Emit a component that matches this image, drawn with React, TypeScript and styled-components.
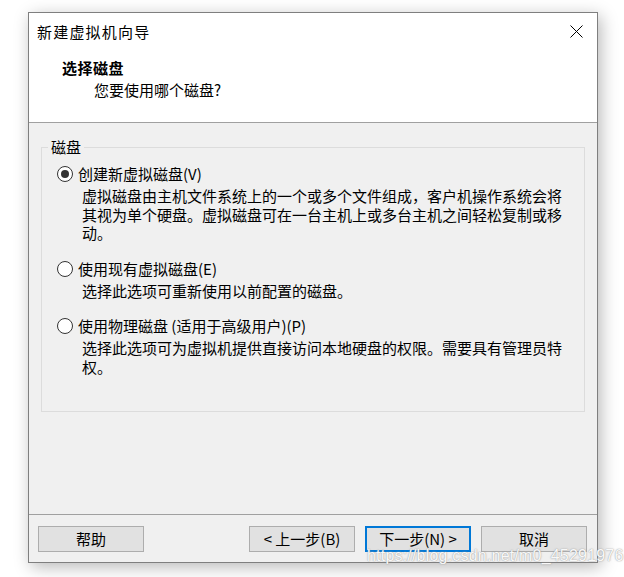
import React from "react";
import styled, { createGlobalStyle } from "styled-components";

const Global = createGlobalStyle`
  html, body { margin: 0; padding: 0; background: #ffffff; }
  body { width: 624px; height: 577px; overflow: hidden; position: relative;
    font-family: "Noto Sans CJK SC", "Noto Sans", sans-serif; color: #000; }
  * { box-sizing: border-box; }
`;

const Page = styled.div`
  padding: 12px 0 0 28px;
`;

const Window = styled.div`
  width: 570px;
  height: 551px;
  border: 1px solid #7f7f7f;
  background: #f0f0f0;
  display: flex;
  flex-direction: column;
  box-shadow: 3px 4px 16px rgba(0, 0, 0, 0.28);
`;

const Header = styled.div`
  height: 110px;
  flex: none;
  background: #ffffff;
  border-bottom: 1px solid #a0a0a0;
`;

const TitleRow = styled.div`
  height: 37px;
  display: flex;
  align-items: center;
  justify-content: space-between;
  padding: 0 14px 0 8px;
`;

const Title = styled.div`
  font-size: 15px;
  letter-spacing: 1.2px;
  line-height: 20px;
`;

const CloseBtn = styled.div`
  width: 14px;
  height: 14px;
  display: flex;
  align-items: center;
  justify-content: center;
`;

const Heading = styled.div`
  margin: 8px 0 0 33px;
  font-size: 15px;
  font-weight: 700;
  letter-spacing: 0.5px;
  line-height: 20px;
`;

const SubHeading = styled.div`
  margin: 2px 0 0 65px;
  font-size: 15px;
  line-height: 20px;
`;

const Body = styled.div`
  flex: 1;
  padding: 14px 12px 0 12px;
`;

const Group = styled.fieldset`
  margin: 0;
  height: 275px;
  border: 1px solid #dcdcdc;
  padding: 0 0 0 15px;
  min-width: 0;
`;

const Legend = styled.legend`
  font-size: 15px;
  line-height: 20px;
  padding: 0 3px;
  margin-left: -9px;
`;

const Option = styled.div<{ $first?: boolean }>`
  margin-top: ${(p) => (p.$first ? "7px" : "16px")};
`;

const RadioRow = styled.label`
  display: flex;
  align-items: center;
  gap: 5px;
  font-size: 15px;
  line-height: 20px;
`;

const Radio = styled.span<{ $checked?: boolean }>`
  width: 16px;
  height: 16px;
  border-radius: 50%;
  border: 1px solid #333333;
  background: #ffffff;
  display: flex;
  align-items: center;
  justify-content: center;
  flex: none;
  &::after {
    content: "";
    width: 8px;
    height: 8px;
    border-radius: 50%;
    background: ${(p) => (p.$checked ? "#333333" : "transparent")};
  }
`;

const Desc = styled.div`
  margin: 3px 0 0 25px;
  width: 486px;
  font-size: 15px;
  line-height: 18.5px;
`;

const Footer = styled.div`
  flex: none;
  height: 48px;
  border-top: 1px solid #a0a0a0;
  padding: 11px 10px 10px 9px;
  display: flex;
  align-items: flex-start;
  gap: 10px;
`;

const Spacer = styled.div`
  flex: 1;
`;

const Button = styled.div<{ $default?: boolean }>`
  width: 106px;
  height: 26px;
  background: #e1e1e1;
  border: ${(p) => (p.$default ? "2px solid #0078d7" : "1px solid #adadad")};
  display: flex;
  align-items: center;
  justify-content: center;
  font-size: 15px;
  line-height: 20px;
  white-space: pre;
`;

const Watermark = styled.div`
  position: absolute;
  left: 367px;
  top: 546px;
  font-family: "Liberation Sans", Arial, sans-serif;
  font-size: 16px;
  line-height: 20px;
  color: rgba(255, 255, 255, 0.95);
  text-shadow: 0 0 1px rgba(140, 140, 140, 0.9), 0 0 2px rgba(170, 170, 170, 0.6);
  letter-spacing: 0.2px;
  pointer-events: none;
`;

export default function App() {
  return (
    <>
      <Global />
      <Page>
        <Window>
          <Header>
            <TitleRow>
              <Title>新建虚拟机向导</Title>
              <CloseBtn>
                <svg width="13" height="13" viewBox="0 0 13 13">
                  <path d="M0.5 0.5 L12.5 12.5 M12.5 0.5 L0.5 12.5" stroke="#000" strokeWidth="1" fill="none" />
                </svg>
              </CloseBtn>
            </TitleRow>
            <Heading>选择磁盘</Heading>
            <SubHeading>您要使用哪个磁盘?</SubHeading>
          </Header>
          <Body>
            <Group>
              <Legend>磁盘</Legend>
              <Option $first>
                <RadioRow>
                  <Radio $checked />
                  创建新虚拟磁盘(V)
                </RadioRow>
                <Desc>
                  虚拟磁盘由主机文件系统上的一个或多个文件组成，客户机操作系统会将其视为单个硬盘。虚拟磁盘可在一台主机上或多台主机之间轻松复制或移动。
                </Desc>
              </Option>
              <Option>
                <RadioRow>
                  <Radio />
                  使用现有虚拟磁盘(E)
                </RadioRow>
                <Desc>选择此选项可重新使用以前配置的磁盘。</Desc>
              </Option>
              <Option>
                <RadioRow>
                  <Radio />
                  使用物理磁盘 (适用于高级用户)(P)
                </RadioRow>
                <Desc>
                  选择此选项可为虚拟机提供直接访问本地硬盘的权限。需要具有管理员特权。
                </Desc>
              </Option>
            </Group>
          </Body>
          <Footer>
            <Button>帮助</Button>
            <Spacer />
            <Button>{"< 上一步(B)"}</Button>
            <Button $default>{"下一步(N) >"}</Button>
            <Button>取消</Button>
          </Footer>
        </Window>
      </Page>
      <Watermark>https://blog.csdn.net/m0_45291976</Watermark>
    </>
  );
}
